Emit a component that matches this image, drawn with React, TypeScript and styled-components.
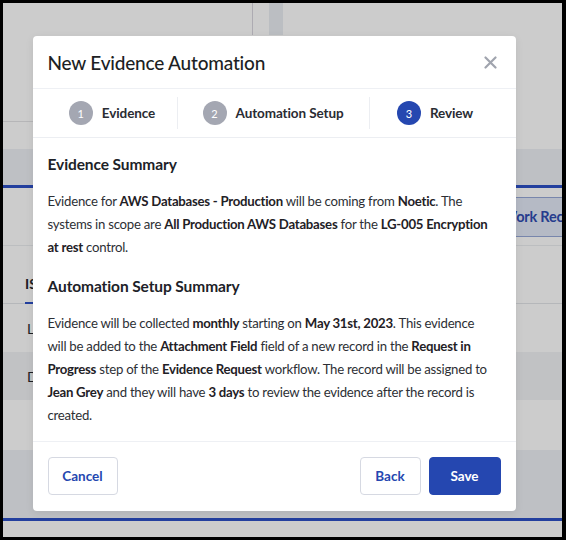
import styled, { createGlobalStyle } from "styled-components";

const GlobalStyle = createGlobalStyle`
  html, body {
    margin: 0;
    padding: 0;
    background: #000;
  }
  body {
    font-family: Lato, "Noto Sans", sans-serif;
  }
  * {
    box-sizing: border-box;
  }
`;

const Frame = styled.div`
  width: 566px;
  height: 540px;
  padding: 3px 4px 3px 3px;
  background: #000;
`;

const Page = styled.div`
  position: relative;
  width: 559px;
  height: 534px;
  background: #fff;
  overflow: hidden;
  color: #25272c;
`;

const TopArea = styled.div`
  display: flex;
  height: 119px;
  width: 50%;
  border-bottom: 1px solid #e4e4e6;
`;

const TopCell = styled.div<{ $w: number }>`
  width: ${({ $w }) => $w}px;
  height: 32px;
  border-right: 1px solid #d9d6df;
`;

const ScrollBar = styled.div`
  margin-left: 16px;
  width: 15px;
  height: 32px;
  background: #eaeef3;
`;

const Band = styled.div<{ $h: number }>`
  height: ${({ $h }) => $h}px;
  background: #eef0f5;
  border-bottom: 3px solid #2c4fc6;
`;

const Spacer = styled.div<{ $h: number }>`
  height: ${({ $h }) => $h}px;
`;

const Toolbar = styled.div`
  display: flex;
  align-items: center;
  height: 58px;
  padding-left: 486px;
  border-bottom: 1px solid #eceef0;
`;

const GhostButton = styled.div`
  flex: none;
  height: 40px;
  padding: 0 12px;
  display: flex;
  align-items: center;
  background: #e3e9f7;
  border: 1px solid #97a8d8;
  border-radius: 3px;
  color: #2f4bb1;
  font-weight: 700;
  font-size: 14.5px;
  letter-spacing: -0.2px;
  white-space: nowrap;
`;

const Tabs = styled.div`
  height: 58px;
  display: flex;
  align-items: flex-end;
  padding-left: 22px;
  border-bottom: 1px solid #e3e5e9;
`;

const Tab = styled.div`
  padding: 0 0 10px;
  border-bottom: 2px solid #2c4fc6;
  font-weight: 700;
  font-size: 14px;
  color: #25272c;
  margin-bottom: -1px;
`;

const Row = styled.div<{ $shade?: boolean }>`
  height: 48px;
  display: flex;
  align-items: center;
  padding-left: 24px;
  font-size: 14px;
  background: ${({ $shade }) => ($shade ? "#f2f3f6" : "#fff")};
`;

const Overlay = styled.div`
  position: absolute;
  inset: 0;
  background: rgba(0, 0, 0, 0.2);
  display: flex;
  align-items: flex-start;
  justify-content: center;
  padding: 33px 0 0 0;
`;

const Modal = styled.div`
  width: 483px;
  margin-right: 17px;
  background: #fff;
  border-radius: 4px;
  box-shadow: 0 2px 8px rgba(0, 0, 0, 0.08);
`;

const Header = styled.div`
  display: flex;
  align-items: center;
  justify-content: space-between;
  height: 53px;
  padding: 0 17px 0 15px;
  border-bottom: 1px solid #eef0f4;
`;

const Title = styled.h2`
  margin: 0;
  font-size: 19px;
  font-weight: 500;
  letter-spacing: -0.2px;
  color: #1d1f24;
`;

const CloseButton = styled.button`
  border: 0;
  background: none;
  padding: 0;
  width: 16px;
  height: 16px;
  display: flex;
  align-items: center;
  justify-content: center;
  cursor: pointer;
`;

const Steps = styled.div`
  display: grid;
  grid-template-columns: 129px 192px 132px;
  height: 49px;
  padding: 0 15px;
  border-bottom: 1px solid #eceef2;
  align-items: center;
`;

const Step = styled.div<{ $first?: boolean }>`
  display: flex;
  align-items: center;
  justify-content: center;
  gap: 9px;
  height: 32px;
  border-left: ${({ $first }) => ($first ? "0" : "1px solid #eceef2")};
`;

const StepNumber = styled.span<{ $active?: boolean }>`
  width: 24px;
  height: 24px;
  border-radius: 50%;
  background: ${({ $active }) => ($active ? "#2547b0" : "#a4a7b2")};
  color: #fff;
  font-size: 11px;
  display: flex;
  align-items: center;
  justify-content: center;
`;

const StepLabel = styled.span`
  font-size: 13.5px;
  font-weight: 700;
  letter-spacing: -0.1px;
  color: #2a2c33;
`;

const Body = styled.div`
  padding: 14px 15px 13px;
  border-bottom: 1px solid #eef0f4;
`;

const SectionTitle = styled.h3`
  margin: 0 0 14px;
  font-size: 15.5px;
  line-height: 24px;
  font-weight: 700;
  letter-spacing: -0.1px;
  color: #202228;
`;

const Paragraph = styled.p`
  margin: 0 0 14px;
  font-size: 13.2px;
  line-height: 23.2px;
  letter-spacing: -0.25px;
  white-space: nowrap;
  color: #2d2f35;
  &:last-child {
    margin-bottom: 0;
  }
  b {
    font-weight: 700;
    color: #1f2126;
  }
`;

const Footer = styled.div`
  display: flex;
  align-items: center;
  justify-content: space-between;
  padding: 15px 15px 16px;
`;

const Actions = styled.div`
  display: flex;
  gap: 8px;
`;

const Button = styled.button<{ $primary?: boolean; $w: number }>`
  width: ${({ $w }) => $w}px;
  height: 38px;
  padding: 0;
  border-radius: 4px;
  font-family: Lato, "Noto Sans", sans-serif;
  font-size: 13.5px;
  font-weight: 700;
  cursor: pointer;
  border: 1px solid ${({ $primary }) => ($primary ? "#2547b0" : "#d6d9e2")};
  background: ${({ $primary }) => ($primary ? "#2547b0" : "#fff")};
  color: ${({ $primary }) => ($primary ? "#fff" : "#2547b0")};
`;

const steps = ["Evidence", "Automation Setup", "Review"];

const App = () => {
  return (
    <>
      <GlobalStyle />
      <Frame>
        <Page>
          <TopArea>
            <TopCell $w={270} />
            <ScrollBar />
          </TopArea>
          <Spacer $h={27} />
          <Band $h={39} />
          <Toolbar>
            <GhostButton>Work Records</GhostButton>
          </Toolbar>
          <Tabs>
            <Tab>ISSUES</Tab>
          </Tabs>
          <Row>Linked</Row>
          <Row $shade>Details</Row>
          <Spacer $h={50} />
          <Band $h={71} />

          <Overlay>
            <Modal>
              <Header>
                <Title>New Evidence Automation</Title>
                <CloseButton aria-label="Close">
                  <svg width="13" height="13" viewBox="0 0 13 13">
                    <path
                      d="M1.5 1.5 L11.5 11.5 M11.5 1.5 L1.5 11.5"
                      stroke="#a0a4ae"
                      strokeWidth="2.2"
                      strokeLinecap="round"
                    />
                  </svg>
                </CloseButton>
              </Header>
              <Steps>
                {steps.map((label, i) => (
                  <Step key={label} $first={i === 0}>
                    <StepNumber $active={i === 2}>{i + 1}</StepNumber>
                    <StepLabel>{label}</StepLabel>
                  </Step>
                ))}
              </Steps>
              <Body>
                <SectionTitle>Evidence Summary</SectionTitle>
                <Paragraph>
                  Evidence for <b>AWS Databases - Production</b> will be coming
                  from <b>Noetic</b>. The
                  <br />
                  systems in scope are <b>All Production AWS Databases</b> for
                  the <b>LG-005 Encryption</b>
                  <br />
                  <b>at rest</b> control.
                </Paragraph>
                <SectionTitle>Automation Setup Summary</SectionTitle>
                <Paragraph>
                  Evidence will be collected <b>monthly</b> starting on{" "}
                  <b>May 31st, 2023</b>. This evidence
                  <br />
                  will be added to the <b>Attachment Field</b> field of a new
                  record in the <b>Request in</b>
                  <br />
                  <b>Progress</b> step of the <b>Evidence Request</b> workflow.
                  The record will be assigned to
                  <br />
                  <b>Jean Grey</b> and they will have <b>3 days</b> to review
                  the evidence after the record is
                  <br />
                  created.
                </Paragraph>
              </Body>
              <Footer>
                <Button $w={70}>Cancel</Button>
                <Actions>
                  <Button $w={61}>Back</Button>
                  <Button $w={72} $primary>
                    Save
                  </Button>
                </Actions>
              </Footer>
            </Modal>
          </Overlay>
        </Page>
      </Frame>
    </>
  );
};

export default App;
